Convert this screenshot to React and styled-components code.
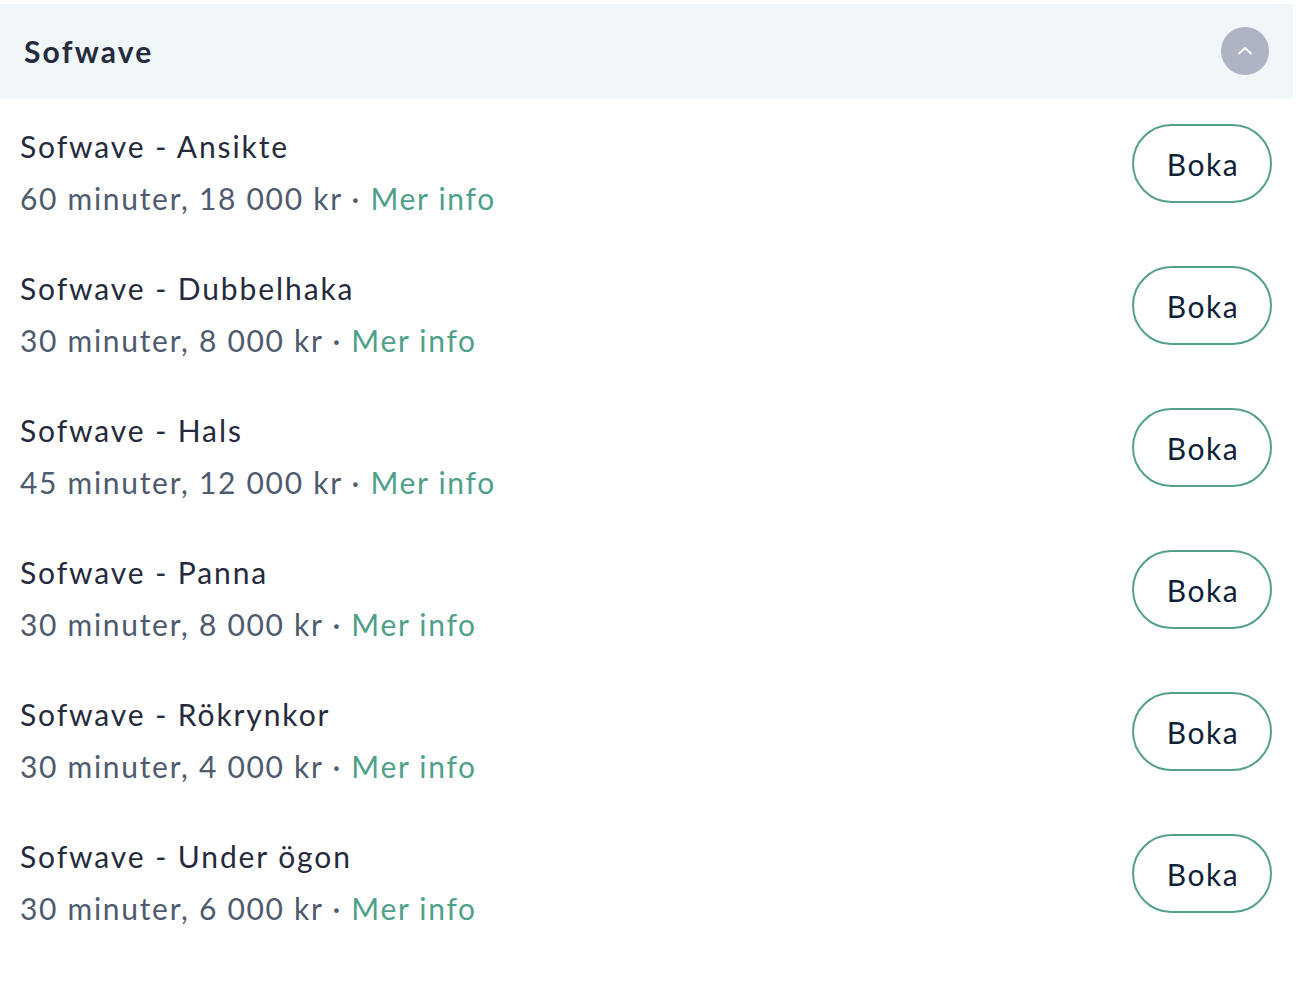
import React, { useState } from "react";
import styled, { createGlobalStyle } from "styled-components";

const GlobalStyle = createGlobalStyle`
  body {
    margin: 0;
    background: #ffffff;
    font-family: "Lato", "Noto Sans", sans-serif;
  }
`;

const Section = styled.section`
  width: 1293px;
  margin-top: 4px;
`;

const Header = styled.div`
  display: flex;
  align-items: center;
  justify-content: space-between;
  height: 95px;
  padding: 0 24px 2px 24px;
  box-sizing: border-box;
  background: #f1f6f9;
`;

const Title = styled.h2`
  margin: 0;
  font-size: 30px;
  font-weight: 700;
  color: #262a3d;
  letter-spacing: 2.2px;
`;

const Toggle = styled.button`
  width: 48px;
  height: 48px;
  border-radius: 50%;
  border: none;
  background: #aeb4c4;
  display: flex;
  align-items: center;
  justify-content: center;
  padding: 0;
  cursor: pointer;
`;

const Row = styled.div`
  display: flex;
  justify-content: space-between;
  align-items: flex-start;
  height: 142px;
  padding: 25px 21px 0 20px;
  box-sizing: border-box;
`;

const Info = styled.div`
  display: flex;
  flex-direction: column;
  padding-top: 2px;
`;

const Name = styled.div`
  font-size: 30px;
  line-height: 40px;
  color: #262a3d;
  letter-spacing: 1.9px;
`;

const Meta = styled.div`
  margin-top: 12px;
  font-size: 30px;
  line-height: 40px;
  color: #4e5a6d;
  letter-spacing: 1.7px;
`;

const More = styled.a`
  color: #4fa08b;
  text-decoration: none;
  cursor: pointer;
`;

const BookButton = styled.button`
  width: 140px;
  height: 79px;
  border: 2px solid #55a08d;
  border-radius: 40px;
  background: #ffffff;
  font-family: inherit;
  font-size: 30px;
  color: #0e1f38;
  letter-spacing: 1.6px;
  padding: 0 0 0 2px;
  cursor: pointer;
`;

const services = [
  { name: "Sofwave - Ansikte", time: "60 minuter", price: "18 000 kr" },
  { name: "Sofwave - Dubbelhaka", time: "30 minuter", price: "8 000 kr" },
  { name: "Sofwave - Hals", time: "45 minuter", price: "12 000 kr" },
  { name: "Sofwave - Panna", time: "30 minuter", price: "8 000 kr" },
  { name: "Sofwave - Rökrynkor", time: "30 minuter", price: "4 000 kr" },
  { name: "Sofwave - Under ögon", time: "30 minuter", price: "6 000 kr" },
];

const App = () => {
  const [open, setOpen] = useState(true);

  return (
    <>
      <GlobalStyle />
      <Section>
        <Header>
          <Title>Sofwave</Title>
          <Toggle onClick={() => setOpen(!open)} aria-label="Fäll ihop">
            <svg width="18" height="18" viewBox="0 0 18 18">
              <path
                d={open ? "M3 11.5 L9 6 L15 11.5" : "M3 6.5 L9 12 L15 6.5"}
                fill="none"
                stroke="#ffffff"
                strokeWidth="2"
                strokeLinecap="round"
                strokeLinejoin="round"
              />
            </svg>
          </Toggle>
        </Header>
        {open &&
          services.map((s) => (
            <Row key={s.name}>
              <Info>
                <Name>{s.name}</Name>
                <Meta>
                  {s.time}, {s.price} · <More>Mer info</More>
                </Meta>
              </Info>
              <BookButton>Boka</BookButton>
            </Row>
          ))}
      </Section>
    </>
  );
};

export default App;
